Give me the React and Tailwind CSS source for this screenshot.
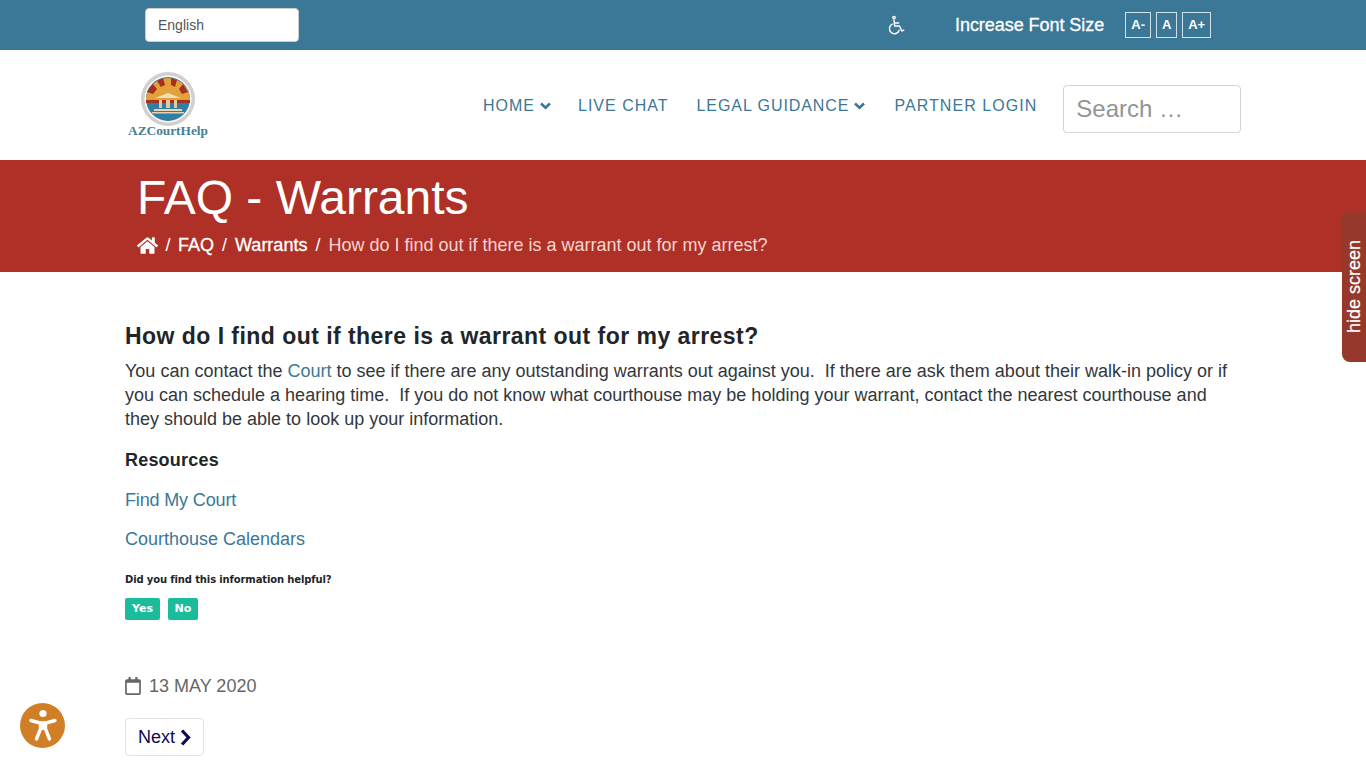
import { FaRegCalendar, FaHome } from 'react-icons/fa';

const verdana = "font-['DejaVu_Sans',sans-serif] font-bold";

function Logo() {
  return (
    <div className="flex flex-col items-center w-[80px]">
      <svg width="56" height="56" viewBox="0 0 56 56">
        <circle cx="28" cy="28" r="27" fill="#d2cfcc" />
        <circle cx="28" cy="28" r="23.5" fill="#fff" />
        <circle cx="28" cy="28" r="22" fill="#2f7ea5" />
        <path d="M6 29a22 22 0 0 1 44 0z" fill="#e3a13c" />
        <path d="M7 21a22 22 0 0 1 6-8l4 5-4 5zM17 10l6-3 2 7-4 2zM31 7l6 2-2 7-4-2zM43 13l5 8-6 2-3-5z" fill="#a5301f" />
        <rect x="6" y="29" width="44" height="3" fill="#a5301f" />
        <path d="M15 27l13-5 13 5z" fill="#efdcb8" />
        <path d="M19 29h3v8h-3zM26 29h4v8h-4zM34 29h3v8h-3z" fill="#e6c9a0" />
        <rect x="14" y="38" width="28" height="2" fill="#e6d3b0" />
        <rect x="12" y="41" width="32" height="1.5" fill="#e6d3b0" />
      </svg>
      <span className="font-['Liberation_Serif',serif] font-bold text-[13.3px] leading-[14px] -mt-[3px] text-[#457f99] whitespace-nowrap">AZCourtHelp</span>
    </div>
  );
}

function WheelchairIcon() {
  return (
    <svg width="20" height="20" viewBox="0 0 20 20" fill="none" stroke="#fff" strokeWidth="1.4" strokeLinecap="round" strokeLinejoin="round">
      <circle cx="8" cy="2.6" r="1.2" />
      <path d="M8 5l.6 6h5l2.2 5 2-.8" />
      <path d="M8.5 8h4.2" />
      <path d="M6.2 9.2a5 5 0 1 0 7 6" />
    </svg>
  );
}

function NavCaret() {
  return (
    <svg width="11" height="8" viewBox="0 0 11 8" fill="none" stroke="currentColor" strokeWidth="2.6" className="ml-[5px]">
      <path d="M1 1.5l4.5 4.2L10 1.5" />
    </svg>
  );
}

export default function App() {
  return (
    <div className="font-['Liberation_Sans',Arial,sans-serif] h-[768px] overflow-hidden bg-white relative">
      {/* top bar */}
      <div className="h-[50px] bg-[#3b7797] flex items-center pl-[145px]">
        <div className="w-[154px] h-[34px] bg-white rounded-[4px] border border-[#ccc] pl-[12px] flex items-center text-[14px] text-[#555]">English</div>
        <div className="ml-[587px]"><WheelchairIcon /></div>
        <span className="ml-[49px] text-white text-[18px] tracking-[-0.05px] [-webkit-text-stroke:0.3px_white] whitespace-nowrap">Increase Font Size</span>
        <div className="flex ml-[21px] gap-[5px]">
          <span className="w-[26px] h-[26px] border border-[#cfe0e8] text-white text-[13px] font-bold flex items-center justify-center">A-</span>
          <span className="w-[21px] h-[26px] border border-[#cfe0e8] text-white text-[13px] font-bold flex items-center justify-center">A</span>
          <span className="w-[29px] h-[26px] border border-[#cfe0e8] text-white text-[13px] font-bold flex items-center justify-center">A+</span>
        </div>
      </div>

      {/* header */}
      <div className="h-[110px] flex items-center pl-[128px]">
        <div className="w-[80px] -mt-[1px]"><Logo /></div>
        <nav className="flex items-center ml-[275px] text-[#3b7797] text-[16px] tracking-[1px] mt-[1px] whitespace-nowrap">
          <span className="flex items-center">HOME<NavCaret /></span>
          <span className="ml-[27px]">LIVE CHAT</span>
          <span className="ml-[28px] flex items-center tracking-[0.93px]">LEGAL GUIDANCE<NavCaret /></span>
          <span className="ml-[29px] tracking-[1.05px]">PARTNER LOGIN</span>
        </nav>
        <div className="ml-[26px] w-[178px] h-[48px] border border-[#ced4da] rounded-[4px] flex items-center pl-[12px] text-[24px] text-[#949494] mt-[7px]">Search …</div>
      </div>

      {/* banner */}
      <div className="h-[112px] bg-[#ae3026] pl-[137px] pt-[9px] text-white">
        <h1 className="text-[48px] leading-[58px]">FAQ - Warrants</h1>
        <div className="flex items-center text-[18px] leading-[24px] mt-[6px] whitespace-nowrap">
          <FaHome size={21} />
          <span className="mx-[7.5px]">/</span>
          <span className="[-webkit-text-stroke:0.3px_white]">FAQ</span>
          <span className="mx-[8px]">/</span>
          <span className="[-webkit-text-stroke:0.3px_white]">Warrants</span>
          <span className="mx-[8px]">/</span>
          <span className="text-[#f5d5d2]">How do I find out if there is a warrant out for my arrest?</span>
        </div>
      </div>

      {/* content */}
      <div className="pl-[125px] pt-[50px] w-[1241px] text-[#212529]">
        <h2 className="font-bold text-[23px] tracking-[0.46px] leading-[29px] whitespace-nowrap">How do I find out if there is a warrant out for my arrest?</h2>
        <p className="text-[18px] leading-[24px] mt-[8px] text-[#33373b] whitespace-pre-wrap">
          You can contact the <span className="text-[#3b7797]">Court</span>{' to see if there are any outstanding warrants out against you.  If there are ask them about their walk-in policy or if\nyou can schedule a hearing time.  If you do not know what courthouse may be holding your warrant, contact the nearest courthouse and\nthey should be able to look up your information.'}
        </p>
        <p className="font-bold text-[18px] tracking-[0.2px] leading-[24px] mt-[17px]">Resources</p>
        <p className="text-[#3b7797] text-[18px] tracking-[-0.15px] leading-[24px] mt-[16px]">Find My Court</p>
        <p className="text-[#3b7797] text-[18px] leading-[24px] mt-[15px]">Courthouse Calendars</p>
        <p className={`${verdana} text-[10px] leading-[16px] mt-[21px] tracking-[-0.13px]`}>Did you find this information helpful?</p>
        <div className="flex gap-[8px] mt-[10px]">
          <span className={`${verdana} w-[35px] h-[22px] bg-[#1abc9c] rounded-[2px] text-white text-[11px] flex items-center justify-center`}>Yes</span>
          <span className={`${verdana} w-[30px] h-[22px] bg-[#1abc9c] rounded-[2px] text-white text-[11px] flex items-center justify-center`}>No</span>
        </div>
        <div className="flex items-center mt-[54px] text-[18px] leading-[24px] text-[#666]">
          <FaRegCalendar size={18} className="mr-[8px] w-[16px]" />13 MAY 2020
        </div>
        <div className="mt-[20px] w-[79px] h-[38px] border border-[#dee2e6] rounded-[4px] flex items-center justify-center text-[18px] text-[#0d0a54]">
          Next
          <svg width="11" height="17" viewBox="0 0 11 17" fill="none" stroke="currentColor" strokeWidth="3.2" className="ml-[5px]">
            <path d="M2 1.5l6.5 7-6.5 7" />
          </svg>
        </div>
      </div>

      {/* hide screen tab */}
      <div className="absolute right-0 top-[212px] w-[24px] h-[150px] bg-[#96392c] rounded-l-[8px] flex items-center justify-center">
        <span className="[writing-mode:vertical-rl] rotate-180 text-white text-[18px] [-webkit-text-stroke:0.2px_white] whitespace-nowrap">hide screen</span>
      </div>

      {/* accessibility button */}
      <div className="absolute left-[20px] top-[703px] w-[45px] h-[45px] rounded-full bg-[#d17f27] flex items-center justify-center">
        <svg width="34" height="36" viewBox="0 0 34 36" fill="none" stroke="#fff" strokeLinecap="round">
          <circle cx="17" cy="5.5" r="3.6" fill="#fff" stroke="none" />
          <path d="M5 12.5 L14 15 H20 L29 12.5" strokeWidth="3.4" />
          <path d="M14.5 15 V21 L10.5 31 M19.5 15 V21 L23.5 31" strokeWidth="3.4" />
          <path d="M14.5 16h5v6h-5z" fill="#fff" stroke="none" />
        </svg>
      </div>
    </div>
  );
}
